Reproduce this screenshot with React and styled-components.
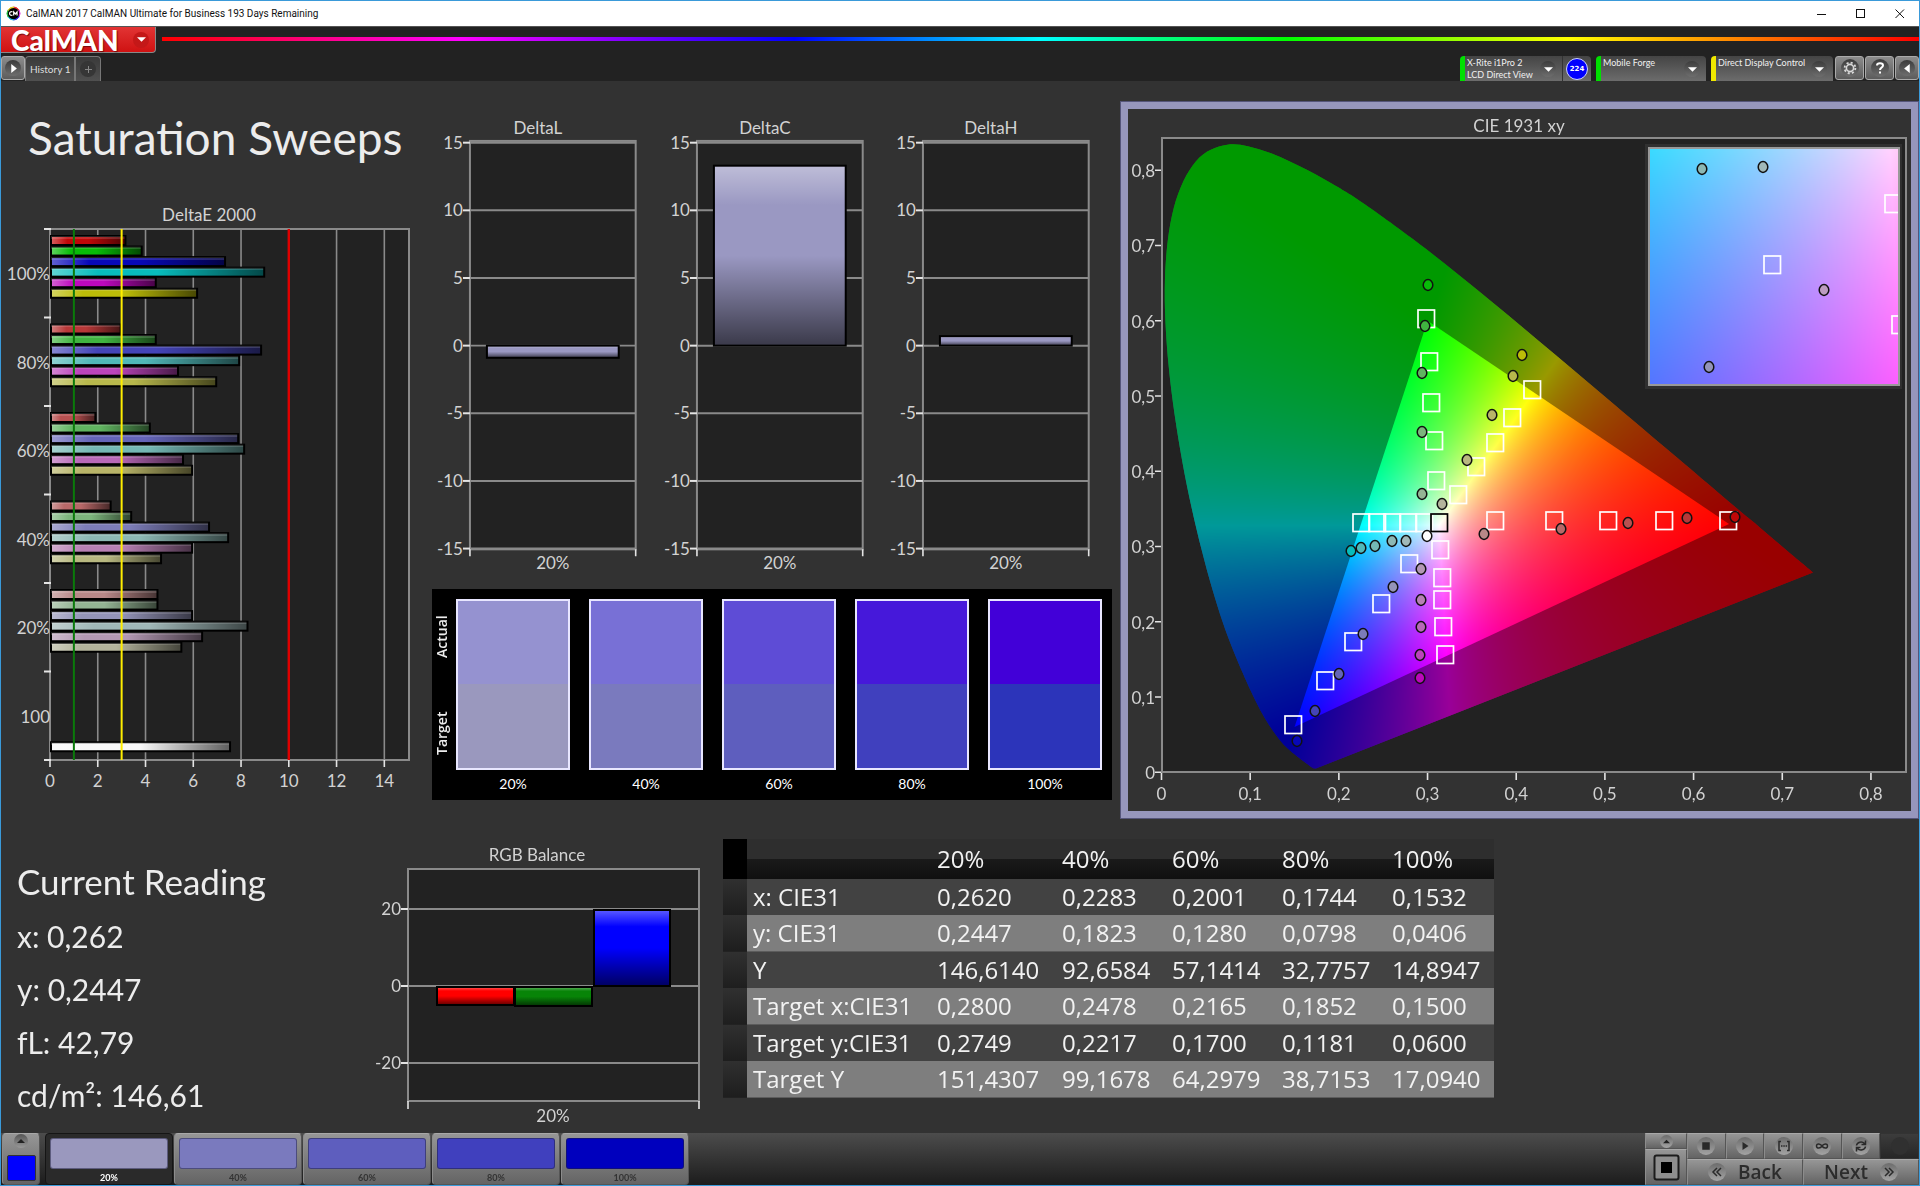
import React, { useLayoutEffect, useRef } from 'react';
import styled, { createGlobalStyle, css } from 'styled-components';

const sans = '"Lato", "Open Sans", sans-serif';
const wide = '"Open Sans", "Noto Sans", sans-serif';

const GlobalStyle = createGlobalStyle`
  *, *::before, *::after { box-sizing: border-box; }
  html, body { margin: 0; background: #323232; }
  body { font-family: ${sans}; color: #ececec; }
  button { font: inherit; color: inherit; border: 0; padding: 0; margin: 0; background: none; cursor: pointer; }
`;

/* ---------- data ---------- */

const LEVELS = ['20%', '40%', '60%', '80%', '100%'];

const HUES = {
  '100%': ['#c00808', '#08bc08', '#0808b8', '#08bcbc', '#bc08bc', '#bcbc08'],
  '80%': ['#b83838', '#40b440', '#4444b8', '#50b8b8', '#bc44bc', '#b8b84c'],
  '60%': ['#b85050', '#60b460', '#6464b8', '#74b8b4', '#b868b8', '#b8b468'],
  '40%': ['#b86868', '#7cb47c', '#7c7cb8', '#8cb8b4', '#b880b4', '#b8b880'],
  '20%': ['#b88888', '#94b494', '#9494b8', '#a0b8b8', '#b498b4', '#b4b49c'],
};

const DELTA_E = [
  { label: '100%', values: [3.16, 3.84, 7.33, 8.97, 4.43, 6.16] },
  { label: '80%', values: [2.96, 4.43, 8.84, 7.92, 5.36, 6.96] },
  { label: '60%', values: [1.9, 4.18, 7.88, 8.13, 5.57, 5.95] },
  { label: '40%', values: [2.54, 3.4, 6.66, 7.46, 5.95, 4.65] },
  { label: '20%', values: [4.5, 4.5, 5.95, 8.27, 6.37, 5.5] },
  { label: '100', values: [null, null, null, null, null, 7.54] },
];

const DELTAS = [
  { name: 'DeltaL', value: -0.9 },
  { name: 'DeltaC', value: 13.3 },
  { name: 'DeltaH', value: 0.7 },
];

const SWATCHES = [
  { label: '20%', actual: '#9592d0', target: '#9a98be' },
  { label: '40%', actual: '#7870d6', target: '#7a7abe' },
  { label: '60%', actual: '#5e4cd6', target: '#5e5ebe' },
  { label: '80%', actual: '#4618da', target: '#4040be' },
  { label: '100%', actual: '#4200d8', target: '#2c34ba' },
];

const TABLE = [
  ['x: CIE31', '0,2620', '0,2283', '0,2001', '0,1744', '0,1532'],
  ['y: CIE31', '0,2447', '0,1823', '0,1280', '0,0798', '0,0406'],
  ['Y', '146,6140', '92,6584', '57,1414', '32,7757', '14,8947'],
  ['Target x:CIE31', '0,2800', '0,2478', '0,2165', '0,1852', '0,1500'],
  ['Target y:CIE31', '0,2749', '0,2217', '0,1700', '0,1181', '0,0600'],
  ['Target Y', '151,4307', '99,1678', '64,2979', '38,7153', '17,0940'],
];

const PATCHES = [
  { label: '20%', color: '#9a98be' },
  { label: '40%', color: '#7a7abe' },
  { label: '60%', color: '#5e5ebe' },
  { label: '80%', color: '#4040be' },
  { label: '100%', color: '#0000be' },
];

const LOCUS = [
  [0.1741, 0.005], [0.1714, 0.0051], [0.1689, 0.0069], [0.1644, 0.0109], [0.1566, 0.0177],
  [0.151, 0.0227], [0.144, 0.0297], [0.1355, 0.0399], [0.1241, 0.0578], [0.1096, 0.0868],
  [0.0913, 0.1327], [0.0687, 0.2007], [0.0454, 0.295], [0.0235, 0.4127], [0.0082, 0.5384],
  [0.0039, 0.6548], [0.0139, 0.7502], [0.0389, 0.812], [0.0743, 0.8338], [0.1142, 0.8262],
  [0.1547, 0.8059], [0.1929, 0.7816], [0.2296, 0.7543], [0.3016, 0.6923], [0.3731, 0.6245],
  [0.4441, 0.5547], [0.5125, 0.4866], [0.5752, 0.4242], [0.627, 0.3725], [0.6658, 0.334],
  [0.6915, 0.3083], [0.719, 0.2809], [0.7347, 0.2653],
];
const GAMUT = [[0.64, 0.33], [0.3, 0.6], [0.15, 0.06]];

/* Marker centres in the space of the chromaticity chart, one list per hue, 20% to 100%. */
const TARGETS = [
  [1495, 521], [1554, 521], [1608, 521], [1664, 521], [1728, 521],
  [1436, 481], [1434, 441], [1431, 403], [1429, 362], [1426, 319],
  [1409, 564], [1381, 604], [1353, 642], [1325, 681], [1293, 725],
  [1424, 523], [1408, 523], [1392, 523], [1377, 523], [1361, 523],
  [1440, 550], [1442, 578], [1442, 600], [1443, 627], [1445, 655],
  [1458, 495], [1476, 467], [1495, 443], [1512, 418], [1532, 390],
];
const READINGS = [
  [[1484, 534], [1561, 529], [1628, 523], [1687, 518], [1735, 517]],
  [[1422, 494], [1422, 432], [1422, 373], [1425, 326], [1428, 285]],
  [[1393, 587], [1363, 634], [1339, 674], [1315, 711], [1297, 741]],
  [[1406, 541], [1392, 541], [1375, 546], [1361, 548], [1351, 551]],
  [[1421, 569], [1421, 600], [1421, 627], [1420, 655], [1420, 678]],
  [[1442, 504], [1467, 460], [1492, 415], [1513, 376], [1522, 355]],
];

/* ---------- window frame ---------- */

const Window = styled.div`
  min-height: 100vh;
  display: flex;
  flex-direction: column;
  border: 1px solid #3a9ad9;
  background: #323232;
`;

const TitleBar = styled.header`
  height: 25px;
  display: flex;
  align-items: center;
  gap: 5px;
  padding-left: 5px;
  background: #fff;
  color: #111;
  font: 10px/16px Roboto, ${wide};
`;
const TitleText = styled.span`flex: 1;`;
const AppIcon = styled.svg`width: 15px; height: 15px;`;
const WindowButton = styled.button`
  width: 39px;
  height: 24px;
  display: grid;
  place-items: center;
  color: #111;
`;

const BrandRow = styled.div`
  height: 30px;
  display: flex;
  align-items: flex-start;
  gap: 6px;
  background: #222;
  border-top: 1px solid #555;
`;
const Brand = styled.button`
  && { color: #fff; }
  width: 155px;
  height: 26px;
  display: flex;
  align-items: center;
  justify-content: space-between;
  padding: 0 6px 0 10px;
  border-bottom: 1px solid #888;
  border-right: 1px solid #888;
  border-radius: 0 0 4px 0;
  background: linear-gradient(#e23434, #cf1212);
  font: 900 28px/22px ${sans};
  text-shadow: 1px 1px 1px rgba(80, 0, 0, 0.7);
`;
const Spectrum = styled.div`
  flex: 1;
  height: 4px;
  margin-top: 10px;
  background: linear-gradient(90deg, #f00, #f0f 17%, #00f 36%, #0ff 50%, #0f0 64%, #ff0 80%, #f00);
`;

const TabRow = styled.div`
  height: 25px;
  display: flex;
  align-items: stretch;
  background: #222;
`;
const Spacer = styled.div`flex: 1;`;
const Group = styled.div`
  display: flex;
  gap: ${(p) => p.$gap || 0}px;
`;
const SquareButton = styled.button`
  width: ${(p) => p.$w || 29}px;
  height: 24px;
  display: grid;
  place-items: center;
  border: 1px solid #aaa;
  border-radius: 3px;
  background: linear-gradient(#8c8c8c, #5c5c5c);
`;
const Tab = styled.button`
  && { color: #ddd; }
  padding: 0 4px;
  display: grid;
  place-items: center;
  border: 1px solid #777;
  border-bottom: 0;
  border-radius: ${(p) => (p.$last ? '0 4px 0 0' : '4px 0 0 0')};
  background: linear-gradient(#3a3a3a, #505050);
  font-size: 10px;
  line-height: 12px;
`;
const Knob = styled.span`
  width: ${(p) => p.$size || 16}px;
  height: ${(p) => p.$size || 16}px;
  flex: none;
  display: grid;
  place-items: center;
  border-radius: 50%;
  background: ${(p) => p.$bg || 'linear-gradient(#3c3c3c, #6e6e6e)'};
`;
const Device = styled.div`
  width: ${(p) => p.$w}px;
  display: flex;
  border-left: 5px solid ${(p) => p.$mark};
  border-radius: 4px 4px 0 0;
  background: linear-gradient(#444, #6c6c6c);
`;
const DevicePick = styled.button`
  && { color: #f0f0f0; }
  flex: 1;
  min-width: 0;
  display: flex;
  align-items: flex-start;
  justify-content: space-between;
  padding: 1px 6px 0 2px;
  font-size: 9px;
  line-height: 12px;
  text-align: left;
  white-space: nowrap;
  ${Knob} { margin-top: 4px; }
`;
const MeterCount = styled.div`
  width: 29px;
  display: grid;
  place-items: center;
  border-left: 1px solid #333;
`;
const Badge = styled.span`
  width: 22px;
  height: 22px;
  display: grid;
  place-items: center;
  border: 1px solid #cfd4ff;
  border-radius: 50%;
  background: #00f;
  font: 700 7px/10px "DejaVu Sans", sans-serif;
  color: #fff;
`;

/* ---------- workspace ---------- */

const Workspace = styled.main`
  flex: 1;
  padding-top: 20px;
`;
const Upper = styled.section`
  display: grid;
  grid-template-columns: 431fr 688fr 799fr;
`;
const Lower = styled.section`
  display: grid;
  grid-template-columns: 384fr 338fr 771fr 425fr;
  align-items: start;
`;
const Column = styled.div`
  min-width: 0;
  display: flex;
  flex-direction: column;
`;
const MiddleColumn = styled(Column)`padding-right: 8px;`;
const PageTitle = styled.h1`
  margin: 0;
  padding: 5px 0 11px 27px;
  font-size: 46px;
  line-height: 64px;
  font-weight: 400;
  white-space: nowrap;
`;
const Chart = styled.svg`
  width: 100%;
  height: auto;
  display: block;
  overflow: visible;
  font-family: ${sans};
  font-size: 17px;
  fill: #d2d2d2;
`;
const ChartTitle = styled.text`
  font-size: 17px;
  text-anchor: middle;
`;
const AxisLabel = styled.text`text-anchor: ${(p) => p.$anchor || 'middle'};`;
const ChartRow = styled.div`
  display: grid;
  grid-template-columns: repeat(3, 1fr);
`;

const SwatchPanel = styled.div`
  height: 211px;
  display: flex;
  padding-right: 10px;
  background: #000;
`;
const SideLabels = styled.div`
  width: 24px;
  height: 192px;
  display: flex;
  flex-direction: column-reverse;
`;
const SideLabel = styled.span`
  flex: 1;
  display: grid;
  place-items: center;
  writing-mode: vertical-rl;
  transform: rotate(180deg);
  padding-left: 4px;
  font: 600 14px/16px ${wide};
`;
const SwatchList = styled.div`
  flex: 1;
  display: flex;
  gap: 19px;
  padding-top: 10px;
`;
const Swatch = styled.figure`
  flex: 1;
  margin: 0;
  text-align: center;
  color: #fff;
  font-size: 14px;
  line-height: 28px;
`;
const SwatchFill = styled.div`
  height: 171px;
  border: 2px solid #e8e6ff;
  background: linear-gradient(${(p) => p.$actual} 50%, ${(p) => p.$target} 50%);
`;

const CieFrame = styled.div`
  display: grid;
  border: 8px solid #9696bc;
  outline: 1px solid #55557a;
  outline-offset: -1px;
  align-self: start;
`;
const layer = css`
  grid-area: 1 / 1;
  width: 100%;
  height: auto;
  display: block;
`;
const CieCanvas = styled.canvas`${layer}`;
const CieOverlay = styled(Chart)`${layer}`;

const Reading = styled.div`
  padding: 38px 0 0 16px;
  font-size: 30px;
  line-height: 53px;
`;
const ReadingTitle = styled.h2`
  margin: 0 0 5px;
  font-size: 35px;
  line-height: 48px;
  font-weight: 400;
`;
const ReadingLine = styled.p`margin: 0;`;

const DataTable = styled.table`
  width: 100%;
  margin-top: 20px;
  border-collapse: separate;
  border-spacing: 0;
  table-layout: fixed;
  font: 24px/32px ${wide};
  color: #f2f2f2;
`;
const HeadCell = styled.th`
  height: 40px;
  padding: 0 6px;
  font-weight: 400;
  text-align: left;
  background: ${(p) => (p.$selector ? '#000' : 'linear-gradient(#2e2e2e 50%, #1a1a1a 50%, #101010)')};
`;
const Row = styled.tr`
  > td, > th {
    height: ${(p) => (p.$light ? 37 : 36)}px;
    padding: 0 6px;
    font-weight: 400;
    text-align: left;
    white-space: nowrap;
    background: ${(p) => (p.$light ? '#7e7e7e' : '#424242')};
    border-bottom: ${(p) => (p.$light ? '1px solid #5c5c5c' : '0')};
  }
  > td:first-child { background: linear-gradient(#303030, #1e1e1e); border-bottom-color: #222; }
`;

/* ---------- bottom bar ---------- */

const BottomBar = styled.footer`
  height: 52px;
  display: flex;
  align-items: stretch;
  padding-left: 1px;
  background: linear-gradient(#4c4c4c, #1c1c1c);
`;
const metal = css`
  background: linear-gradient(#969696, #646464);
  border: 1px solid #a2a2a2;
  border-color: #a8a8a8 #555 #555 #8c8c8c;
`;
const CurrentPatch = styled.div`
  ${metal}
  width: 38px;
  margin-right: 5px;
  padding: 0 3px 3px;
  display: flex;
  flex-direction: column;
  align-items: center;
  justify-content: space-between;
  border-radius: 4px;
`;
const PatchColor = styled.span`
  width: 29px;
  height: 26px;
  border: 1px solid #333;
  border-radius: 2px;
  background: #00f;
`;
const PatchTile = styled.button`
  ${metal}
  && { color: ${(p) => (p.$active ? '#fff' : '#333')}; }
  width: 128px;
  margin-right: 1px;
  padding: 4px 4px 0;
  border-radius: 4px;
  font-size: 9px;
  font-weight: 700;
  line-height: 17px;
  ${(p) => p.$active && css`background: #2a2a2a; border-color: #151515;`}
`;
const TileColor = styled.span`
  display: block;
  height: 31px;
  border: 1px solid rgba(30, 30, 60, 0.5);
  border-radius: 3px;
  background: ${(p) => p.$color};
`;
const StopStack = styled.div`
  width: 42px;
  display: grid;
  grid-template-rows: 16px 1fr;
`;
const MetalButton = styled.button`
  ${metal}
  && { color: #2c2c2c; }
  display: flex;
  align-items: center;
  justify-content: center;
  gap: 12px;
  font: 600 19px/22px ${wide};
  ${(p) => p.$off && css`background: linear-gradient(#3c3c3c, #262626); border-color: #333;`}
`;
const Transport = styled.div`
  width: 232px;
  display: grid;
  grid-template-rows: 26px 26px;
`;
const TransportRow = styled.div`
  display: grid;
  grid-template-columns: repeat(${(p) => p.$n}, 1fr);
`;

/* ---------- small drawings ---------- */

const Caret = ({ dir = 'down', size = 9, color = '#fff' }) => {
  const paths = { down: 'M0 2h8L4 6z', up: 'M0 6h8L4 2z', right: 'M2 0v8l5-4z', left: 'M6 0v8L1 4z' };
  return (
    <svg width={size} height={size} viewBox="0 0 8 8" fill={color} aria-hidden="true">
      <path d={paths[dir]} />
    </svg>
  );
};

const Icon = ({ children, size = 14 }) => (
  <svg width={size} height={size} viewBox="0 0 14 14" fill="none" stroke="#2a2a2a" strokeWidth="1.5" aria-hidden="true">
    {children}
  </svg>
);

const CogIcon = () => (
  <svg width="14" height="14" viewBox="0 0 14 14" fill="none" stroke="#d8d8d8" aria-hidden="true">
    <circle cx="7" cy="7" r="3.6" strokeWidth="1.6" />
    <circle cx="7" cy="7" r="5.4" strokeWidth="1.8" strokeDasharray="2.1 2.14" />
  </svg>
);

/* ---------- charts ---------- */

const GRID = '#8a8a8a';

function BarShade({ id, vertical }) {
  const dir = vertical ? { x1: 0, y1: 0, x2: 0, y2: 1 } : { x1: 0, y1: 0, x2: 1, y2: 0 };
  return (
    <linearGradient id={id} {...dir}>
      <stop offset="0" stopColor="#fff" stopOpacity="0.36" />
      <stop offset="0.22" stopColor="#fff" stopOpacity="0" />
      <stop offset="0.5" stopColor="#000" stopOpacity="0" />
      <stop offset="1" stopColor="#000" stopOpacity="0.62" />
    </linearGradient>
  );
}

function Bar({ x, y, w, h, color, shade }) {
  return (
    <g>
      <rect x={x} y={y} width={w} height={h} fill={color} />
      <rect x={x} y={y} width={w} height={h} fill={`url(#${shade})`} stroke="#000" strokeWidth="2" />
    </g>
  );
}

function DeltaEChart() {
  const left = 49;
  const top = 48;
  const bottom = 579;
  const step = (bottom - top) / 6;
  const sx = (v) => left + v * 23.88;
  const evens = [0, 2, 4, 6, 8, 10, 12, 14];
  return (
    <Chart viewBox="0 0 431 637" role="img" aria-label="DeltaE 2000">
      <defs>
        <BarShade id="deltaE" />
        <linearGradient id="gloss" x1="0" y1="0" x2="0" y2="1">
          <stop offset="0.28" stopColor="#fff" stopOpacity="0.14" />
          <stop offset="0.3" stopColor="#fff" stopOpacity="0" />
        </linearGradient>
      </defs>
      <ChartTitle x="208" y="40">DeltaE 2000</ChartTitle>
      <rect x={left} y={top} width="359" height={bottom - top} fill="#222" stroke={GRID} strokeWidth="2" />
      {evens.map((v) => (
        <g key={v}>
          <path d={`M${sx(v)} ${top}V${bottom}`} stroke={GRID} strokeWidth="1.6" />
          <path d={`M${sx(v)} ${bottom}v7`} stroke="#e4e4e4" strokeWidth="1.6" />
          <AxisLabel x={sx(v)} y={bottom + 27}>{v}</AxisLabel>
        </g>
      ))}
      {[0, 1, 2, 3, 4, 5, 6].map((i) => (
        <path key={i} d={`M43 ${top + i * step}h7`} stroke="#e4e4e4" strokeWidth="2" />
      ))}
      {DELTA_E.map((row, g) => (
        <g key={row.label}>
          <AxisLabel $anchor="end" x="49" y={top + g * step + 51}>{row.label}</AxisLabel>
          {row.values.map((v, i) => {
            if (v === null) return null;
            const color = HUES[row.label] ? HUES[row.label][i] : '#f8f8f8';
            const y = top + g * step + 7 + i * 10.55 + (g === 5 ? 11 : 0);
            return (
              <g key={i}>
                <Bar x={left + 1} y={y} w={sx(v) - left - 1} h={9} color={color} shade="deltaE" />
                <rect x={left + 1} y={y} width={sx(v) - left - 2} height={9} fill="url(#gloss)" />
              </g>
            );
          })}
        </g>
      ))}
      <path d={`M${sx(1)} ${top}V${bottom}`} stroke="#0a7a0a" strokeWidth="2" />
      <path d={`M${sx(3)} ${top}V${bottom}`} stroke="#ffee00" strokeWidth="2" />
      <path d={`M${sx(10)} ${top}V${bottom}`} stroke="#e00000" strokeWidth="2.4" />
    </Chart>
  );
}

function DeltaChart({ name, value }) {
  const sy = (v) => 245 - v * 13.55;
  const y0 = Math.min(sy(0), sy(value));
  return (
    <Chart viewBox="0 0 227 489" role="img" aria-label={name}>
      <defs><BarShade id={`shade${name}`} vertical /></defs>
      <ChartTitle x="106" y="33">{name}</ChartTitle>
      <rect x="38" y="40" width="166" height="409" fill="#222" stroke={GRID} strokeWidth="2" />
      {[15, 10, 5, 0, -5, -10, -15].map((v) => (
        <g key={v}>
          <path d={`M38 ${sy(v)}h166`} stroke={GRID} strokeWidth="2" />
          <path d={`M31 ${sy(v)}h7`} stroke="#e4e4e4" strokeWidth="2" />
          <AxisLabel $anchor="end" x="31" y={sy(v) + 6}>{v}</AxisLabel>
        </g>
      ))}
      <path d="M38 449v7M204 449v7" stroke="#e4e4e4" strokeWidth="1.6" />
      <Bar x={55} y={y0} w={132} h={Math.abs(sy(value) - sy(0))} color="#9a98c2" shade={`shade${name}`} />
      <AxisLabel x="121" y="469">20%</AxisLabel>
    </Chart>
  );
}

function RgbChart() {
  return (
    <Chart viewBox="0 0 338 310" role="img" aria-label="RGB Balance">
      <defs><BarShade id="rgb" vertical /></defs>
      <ChartTitle x="152" y="42">RGB Balance</ChartTitle>
      <rect x="23" y="50" width="291" height="232" fill="#222" stroke={GRID} strokeWidth="2" />
      {[[20, 90], [0, 167], [-20, 244]].map(([v, y]) => (
        <g key={v}>
          <path d={`M23 ${y}h291`} stroke={GRID} strokeWidth="2" />
          <path d={`M16 ${y}h7`} stroke="#e4e4e4" strokeWidth="2" />
          <AxisLabel $anchor="end" x="16" y={y + 6}>{v}</AxisLabel>
        </g>
      ))}
      <path d="M23 282v8M314 282v8" stroke="#e4e4e4" strokeWidth="1.6" />
      <Bar x={52} y={168} w={77} h={18} color="#ff0000" shade="rgb" />
      <Bar x={130} y={168} w={77} h={19} color="#088408" shade="rgb" />
      <Bar x={209} y={91} w={76} h={76} color="#0000ff" shade="rgb" />
      <AxisLabel x="168" y="303">20%</AxisLabel>
    </Chart>
  );
}

/* Chromaticity chart: the chart space starts at (VX, VY) and is VW by VH. */
const VX = 1128;
const VY = 109;
const VW = 783;
const VH = 702;
const PX = (x) => 1161.5 + x * 886.8;
const PY = (y) => 772.2 - y * 752.5;
const INSET = { x: 1650, y: 149, w: 248, h: 235 };

function chromaToRgb(x, y) {
  if (y < 0.0001) return [0, 0, 0];
  const X = x / y;
  const Z = (1 - x - y) / y;
  const lin = [
    3.2406 * X - 1.5372 - 0.4986 * Z,
    -0.9689 * X + 1.8758 + 0.0415 * Z,
    0.0557 * X - 0.204 + 1.057 * Z,
  ].map((c) => Math.max(0, c));
  const max = Math.max(lin[0], lin[1], lin[2]) || 1;
  return lin.map((c) => (255 * c) / max);
}

function shadeImage(w, h, toX, toY) {
  const c = document.createElement('canvas');
  c.width = w;
  c.height = h;
  const g = c.getContext('2d');
  const img = g.createImageData(w, h);
  for (let j = 0; j < h; j += 1) {
    for (let i = 0; i < w; i += 1) {
      const rgb = chromaToRgb(toX(i), toY(j));
      const k = (j * w + i) * 4;
      img.data[k] = rgb[0];
      img.data[k + 1] = rgb[1];
      img.data[k + 2] = rgb[2];
      img.data[k + 3] = 255;
    }
  }
  g.putImageData(img, 0, 0);
  return c;
}

function locusPath(g) {
  const pts = LOCUS.map(([x, y]) => [PX(x) - VX, PY(y) - VY]);
  g.beginPath();
  g.moveTo(pts[0][0], pts[0][1]);
  for (let i = 0; i < pts.length - 1; i += 1) {
    const a = pts[Math.max(0, i - 1)];
    const b = pts[i];
    const c = pts[i + 1];
    const d = pts[Math.min(pts.length - 1, i + 2)];
    g.bezierCurveTo(
      b[0] + (c[0] - a[0]) / 6, b[1] + (c[1] - a[1]) / 6,
      c[0] - (d[0] - b[0]) / 6, c[1] - (d[1] - b[1]) / 6,
      c[0], c[1],
    );
  }
  g.closePath();
}

function paintCie(canvas) {
  const g = canvas.getContext('2d');
  g.fillStyle = '#323232';
  g.fillRect(0, 0, VW, VH);
  g.fillStyle = '#222';
  g.fillRect(1162 - VX, 138 - VY, 745, 634);

  const full = shadeImage(VW, VH, (i) => (i + VX - 1161.5) / 886.8, (j) => (772.2 - j - VY) / 752.5);
  g.save();
  locusPath(g);
  g.clip();
  g.drawImage(full, 0, 0);
  g.fillStyle = 'rgba(0, 0, 0, 0.4)';
  g.fillRect(0, 0, VW, VH);
  g.restore();

  g.save();
  g.beginPath();
  GAMUT.forEach(([x, y], i) => (i ? g.lineTo(PX(x) - VX, PY(y) - VY) : g.moveTo(PX(x) - VX, PY(y) - VY)));
  g.closePath();
  g.clip();
  g.drawImage(full, 0, 0);
  g.restore();

  const zoom = shadeImage(
    INSET.w, INSET.h,
    (i) => 0.28 + (i + INSET.x - 1772) / 3483,
    (j) => 0.2749 - (j + INSET.y - 265) / 3400,
  );
  g.fillStyle = '#303030';
  g.fillRect(1645 - VX, 144 - VY, 257, 245);
  g.drawImage(zoom, INSET.x - VX, INSET.y - VY);
}

const Target = ({ x, y, color = '#fff' }) => (
  <rect x={x - 8} y={y - 9} width="16.5" height="17.5" fill="none" stroke={color} strokeWidth="1.7" />
);
const Dot = ({ x, y, color }) => (
  <ellipse cx={x} cy={y} rx="4.8" ry="5.4" fill={color} stroke="#111" strokeWidth="1.5" />
);

function CieChart() {
  const ref = useRef(null);
  useLayoutEffect(() => paintCie(ref.current), []);
  const xs = [0, 1, 2, 3, 4, 5, 6, 7, 8];
  const name = (n) => (n === 0 ? '0' : `0,${n}`);
  return (
    <CieFrame>
      <CieCanvas ref={ref} width={VW} height={VH} aria-hidden="true" />
      <CieOverlay viewBox={`${VX} ${VY} ${VW} ${VH}`} role="img" aria-label="CIE 1931 xy">
        <defs>
          <clipPath id="inset"><rect x={INSET.x} y={INSET.y} width={INSET.w} height={INSET.h} /></clipPath>
        </defs>
        <ChartTitle x="1519" y="132">CIE 1931 xy</ChartTitle>
        <rect x="1162" y="138" width="744" height="634" fill="none" stroke={GRID} strokeWidth="2" />
        {xs.map((n) => (
          <g key={n}>
            <path d={`M${PX(n / 10)} 773v7M1155 ${PY(n / 10)}h6`} stroke="#e4e4e4" strokeWidth="1.6" />
            <AxisLabel x={PX(n / 10)} y="800">{name(n)}</AxisLabel>
            <AxisLabel $anchor="end" x="1155" y={PY(n / 10) + 7}>{name(n)}</AxisLabel>
          </g>
        ))}
        {TARGETS.map(([x, y], i) => <Target key={i} x={x} y={y} />)}
        <Target x={1439} y={523} color="#000" />
        {READINGS.map((list, h) => list.map(([x, y], i) => (
          <Dot key={`${h}-${i}`} x={x} y={y} color={HUES[LEVELS[i]][h]} />
        )))}
        <Dot x={1427} y={536} color="#fff" />
        <rect x={INSET.x - 1} y={INSET.y - 1} width={INSET.w + 2} height={INSET.h + 2} fill="none" stroke="#999" strokeWidth="2" />
        <g clipPath="url(#inset)">
          <Target x={1772} y={265} />
          <Target x={1893} y={204} />
          <Target x={1900} y={325} />
        </g>
        <Dot x={1702} y={169} color={HUES['40%'][3]} />
        <Dot x={1763} y={167} color={HUES['20%'][3]} />
        <Dot x={1824} y={290} color="#bc9cc0" />
        <Dot x={1709} y={367} color={HUES['20%'][2]} />
      </CieOverlay>
    </CieFrame>
  );
}

/* ---------- page ---------- */

const steel = 'linear-gradient(#6c6c6c, #a4a4a4)';

function Header() {
  return (
    <>
      <TitleBar>
        <AppIcon viewBox="0 0 16 16" aria-hidden="true">
          <path d="M8 8V1A7 7 0 0 1 14 4.5Z" stroke="#e33" fill="#e33" />
          <path d="M8 8L14 4.5A7 7 0 0 1 14 11.5Z" stroke="#d3d" fill="#d3d" />
          <path d="M8 8L14 11.5A7 7 0 0 1 8 15Z" stroke="#33e" fill="#33e" />
          <path d="M8 8V15A7 7 0 0 1 2 11.5Z" stroke="#2bd" fill="#2bd" />
          <path d="M8 8L2 11.5A7 7 0 0 1 2 4.5Z" stroke="#2b4" fill="#2b4" />
          <path d="M8 8L2 4.5A7 7 0 0 1 8 1Z" stroke="#dc2" fill="#dc2" />
          <circle cx="8" cy="8" r="6" fill="#000" />
          <path d="M7 6.4C5 5.4 3.8 6.8 3.8 8S5 10.600 7 9.600M8.200 10V6.300l1.800 2.200 1.800-2.200V10" fill="none" stroke="#fff" strokeWidth="1.3" />
        </AppIcon>
        <TitleText>CalMAN 2017 CalMAN Ultimate for Business 193 Days Remaining</TitleText>
        <Group>
          <WindowButton aria-label="Minimize"><svg width="10" height="10"><path d="M0 5.500h9" stroke="#111" /></svg></WindowButton>
          <WindowButton aria-label="Maximize"><svg width="10" height="10"><rect x="0.5" y="0.5" width="8" height="8" fill="none" stroke="#111" /></svg></WindowButton>
          <WindowButton aria-label="Close"><svg width="10" height="10"><path d="M0.500 0.500l8.500 8.500M9 0.500L0.500 9" stroke="#111" /></svg></WindowButton>
        </Group>
      </TitleBar>
      <BrandRow>
        <Brand>CalMAN<Knob $bg="#c41818"><Caret /></Knob></Brand>
        <Spectrum />
      </BrandRow>
      <TabRow>
        <Group>
          <SquareButton $w={24} aria-label="Show panel"><Knob><Caret dir="right" /></Knob></SquareButton>
        </Group>
        <Tab>History 1</Tab>
        <Tab $last aria-label="Add tab"><Knob $bg="#363636"><svg width="7" height="7"><path d="M3.500 0v7M0 3.500h7" stroke="#888" /></svg></Knob></Tab>
        <Spacer />
        <Group $gap={2}>
          <Group $gap={5}>
            <Device $w={131} $mark="#00e000">
              <DevicePick><span>X-Rite i1Pro 2<br />LCD Direct View</span><Knob><Caret /></Knob></DevicePick>
              <MeterCount><Badge>224</Badge></MeterCount>
            </Device>
            <Device $w={110} $mark="#00e000">
              <DevicePick>Mobile Forge<Knob><Caret /></Knob></DevicePick>
            </Device>
            <Device $w={122} $mark="#f0e800">
              <DevicePick>Direct Display Control<Knob><Caret /></Knob></DevicePick>
            </Device>
          </Group>
          <Group $gap={1}>
            <SquareButton aria-label="Settings"><Knob $size={18}><CogIcon /></Knob></SquareButton>
            <SquareButton aria-label="Help">
              <Knob $size={18}>
                <svg width="10" height="12" viewBox="0 0 10 12" fill="none" stroke="#fff" strokeWidth="2">
                  <path d="M2 3.500C2 0.500 8 0.500 8 3.500 8 5.500 5 5.500 5 8M5 9.500v2" />
                </svg>
              </Knob>
            </SquareButton>
            <SquareButton $w={24} aria-label="Collapse"><Knob><Caret dir="left" /></Knob></SquareButton>
          </Group>
        </Group>
      </TabRow>
    </>
  );
}

function ReadingTable() {
  return (
    <DataTable>
      <colgroup>
        {[24, 184, 125, 110, 110, 110, 108].map((w, i) => (
          <col key={i} style={{ width: `${(w / 771) * 100}%` }} />
        ))}
      </colgroup>
      <thead>
        <tr>
          <HeadCell $selector aria-label="Row" />
          <HeadCell aria-label="Quantity" />
          {LEVELS.map((l) => <HeadCell key={l} scope="col">{l}</HeadCell>)}
        </tr>
      </thead>
      <tbody>
        {TABLE.map(([label, ...cells], i) => (
          <Row key={label} $light={i % 2 === 1}>
            <td />
            <th scope="row">{label}</th>
            {cells.map((c, k) => <td key={k}>{c}</td>)}
          </Row>
        ))}
      </tbody>
    </DataTable>
  );
}

function Footer() {
  return (
    <BottomBar>
      <CurrentPatch>
        <button aria-label="Expand patches"><Knob $size={14} $bg="linear-gradient(#555, #999)"><Caret dir="up" size={8} color="#222" /></Knob></button>
        <PatchColor />
      </CurrentPatch>
      {PATCHES.map((p, i) => (
        <PatchTile key={p.label} $active={i === 0}>
          <TileColor $color={p.color} />
          {p.label}
        </PatchTile>
      ))}
      <Spacer />
      <StopStack>
        <MetalButton aria-label="Expand controls"><Knob $size={13} $bg={steel}><Caret dir="up" size={7} color="#222" /></Knob></MetalButton>
        <MetalButton aria-label="Stop pattern">
          <svg width="27" height="27" viewBox="0 0 27 27">
            <rect x="1.500" y="1.500" width="24" height="24" rx="2" fill="#8e8e8e" stroke="#1c1c1c" strokeWidth="2" />
            <rect x="8" y="8" width="11" height="11" fill="#000" />
          </svg>
        </MetalButton>
      </StopStack>
      <Transport>
        <TransportRow $n={6}>
          <MetalButton aria-label="Stop"><Knob $size={18} $bg={steel}><Icon><rect x="4" y="4" width="6" height="6" fill="#2a2a2a" /></Icon></Knob></MetalButton>
          <MetalButton aria-label="Play"><Knob $size={18} $bg={steel}><Icon><path d="M4.500 3v8l6-4z" fill="#2a2a2a" stroke="none" /></Icon></Knob></MetalButton>
          <MetalButton aria-label="Read series"><Knob $size={18} $bg={steel}><Icon><path d="M4 2.500H2v9h2M10 2.500h2v9h-2M4 7h1.500M6.300 7h1.500M8.600 7h1.500" /></Icon></Knob></MetalButton>
          <MetalButton aria-label="Read continuously"><Knob $size={18} $bg={steel}><Icon><path d="M7 7C5.500 4.500 1.500 4 1.500 7S5.500 9.500 7 7 12.500 4 12.500 7 8.500 9.500 7 7Z" /></Icon></Knob></MetalButton>
          <MetalButton aria-label="Refresh"><Knob $size={18} $bg={steel}><Icon><path d="M2.500 6.500C3 3 8 1.800 10.500 4.500M11.500 7.500C11 11 6 12.200 3.500 9.500M11.500 1.500v4h-4M2.500 12.500v-4h4" /></Icon></Knob></MetalButton>
          <MetalButton $off aria-label="Idle"><Knob $size={18} $bg="#303030" /></MetalButton>
        </TransportRow>
        <TransportRow $n={2}>
          <MetalButton><Knob $size={18} $bg={steel}><Icon><path d="M7 3L3 7l4 4M11 3L7 7l4 4" /></Icon></Knob>Back</MetalButton>
          <MetalButton>Next<Knob $size={18} $bg={steel}><Icon><path d="M3 3l4 4-4 4M7 3l4 4-4 4" /></Icon></Knob></MetalButton>
        </TransportRow>
      </Transport>
    </BottomBar>
  );
}

export default function App() {
  return (
    <Window>
      <GlobalStyle />
      <Header />
      <Workspace>
        <Upper>
          <Column>
            <PageTitle>Saturation Sweeps</PageTitle>
            <DeltaEChart />
          </Column>
          <MiddleColumn>
            <ChartRow>
              {DELTAS.map((d) => <DeltaChart key={d.name} {...d} />)}
            </ChartRow>
            <SwatchPanel>
              <SideLabels>
                <SideLabel>Target</SideLabel>
                <SideLabel>Actual</SideLabel>
              </SideLabels>
              <SwatchList>
                {SWATCHES.map((s) => (
                  <Swatch key={s.label}>
                    <SwatchFill $actual={s.actual} $target={s.target} />
                    <figcaption>{s.label}</figcaption>
                  </Swatch>
                ))}
              </SwatchList>
            </SwatchPanel>
          </MiddleColumn>
          <CieChart />
        </Upper>
        <Lower>
          <Reading>
            <ReadingTitle>Current Reading</ReadingTitle>
            <ReadingLine>x: 0,262</ReadingLine>
            <ReadingLine>y: 0,2447</ReadingLine>
            <ReadingLine>fL: 42,79</ReadingLine>
            <ReadingLine>cd/m²: 146,61</ReadingLine>
          </Reading>
          <RgbChart />
          <ReadingTable />
        </Lower>
      </Workspace>
      <Footer />
    </Window>
  );
}
